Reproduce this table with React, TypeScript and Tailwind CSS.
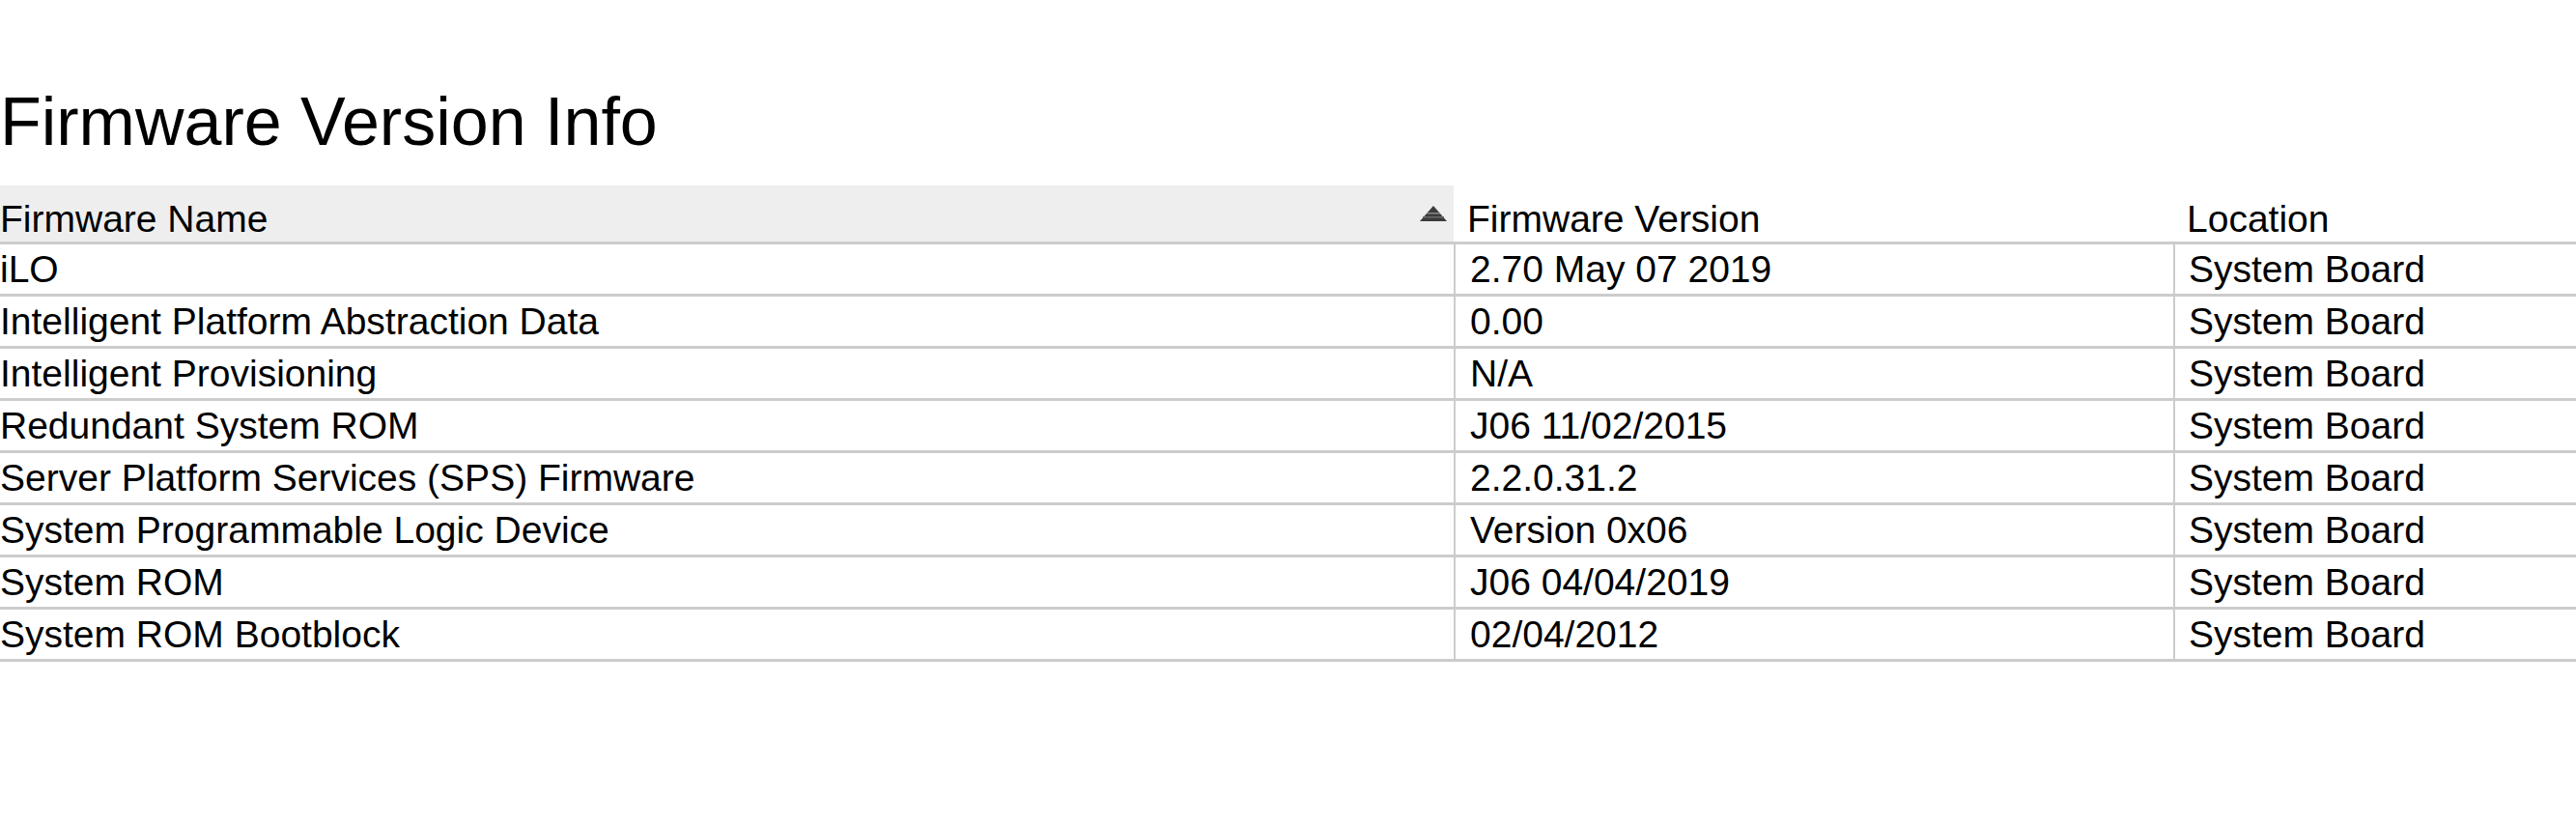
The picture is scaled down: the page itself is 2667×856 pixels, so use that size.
import React from 'react';

const rows = [
  { name: 'iLO', version: '2.70 May 07 2019', location: 'System Board' },
  { name: 'Intelligent Platform Abstraction Data', version: '0.00', location: 'System Board' },
  { name: 'Intelligent Provisioning', version: 'N/A', location: 'System Board' },
  { name: 'Redundant System ROM', version: 'J06 11/02/2015', location: 'System Board' },
  { name: 'Server Platform Services (SPS) Firmware', version: '2.2.0.31.2', location: 'System Board' },
  { name: 'System Programmable Logic Device', version: 'Version 0x06', location: 'System Board' },
  { name: 'System ROM', version: 'J06 04/04/2019', location: 'System Board' },
  { name: 'System ROM Bootblock', version: '02/04/2012', location: 'System Board' },
];

function SortIcon() {
  return (
    <svg width="28" height="16" viewBox="0 0 28 16" className="mr-[7px] self-center">
      <polygon points="14,0 28,16 0,16" fill="#3b3b3b" />
      <rect x="7" y="7" width="14" height="1.5" fill="#8a8a8a" />
      <rect x="3" y="11" width="22" height="1.5" fill="#6a6a6a" />
    </svg>
  );
}

export default function App() {
  return (
    <div className="w-[2667px] bg-white text-black font-['Liberation_Sans',Arial,sans-serif] pt-[86px]">
      <h1 className="text-[70px] leading-[80px] font-normal mb-[26px]">Firmware Version Info</h1>

      <div className="text-[39px] leading-[44px]">
        {/* Header */}
        <div className="grid grid-cols-[1505px_745px_1fr] h-[61px] border-b-[3px] border-[#cccccc]">
          <div className="flex justify-between bg-[#eeeeee]">
            <span className="self-end pb-[1px]">Firmware Name</span>
            <SortIcon />
          </div>
          <div className="flex pl-[14px]">
            <span className="self-end pb-[1px]">Firmware Version</span>
          </div>
          <div className="flex pl-[14px]">
            <span className="self-end pb-[1px]">Location</span>
          </div>
        </div>

        {/* Rows */}
        {rows.map((r) => (
          <div
            key={r.name}
            className="grid grid-cols-[1505px_745px_1fr] h-[54px] border-b-[3px] border-[#cccccc]"
          >
            <div className="flex items-center whitespace-nowrap">{r.name}</div>
            <div className="flex items-center border-l-2 border-[#cccccc] pl-[15px] whitespace-nowrap">{r.version}</div>
            <div className="flex items-center border-l-2 border-[#cccccc] pl-[14px] whitespace-nowrap">{r.location}</div>
          </div>
        ))}
      </div>
    </div>
  );
}
